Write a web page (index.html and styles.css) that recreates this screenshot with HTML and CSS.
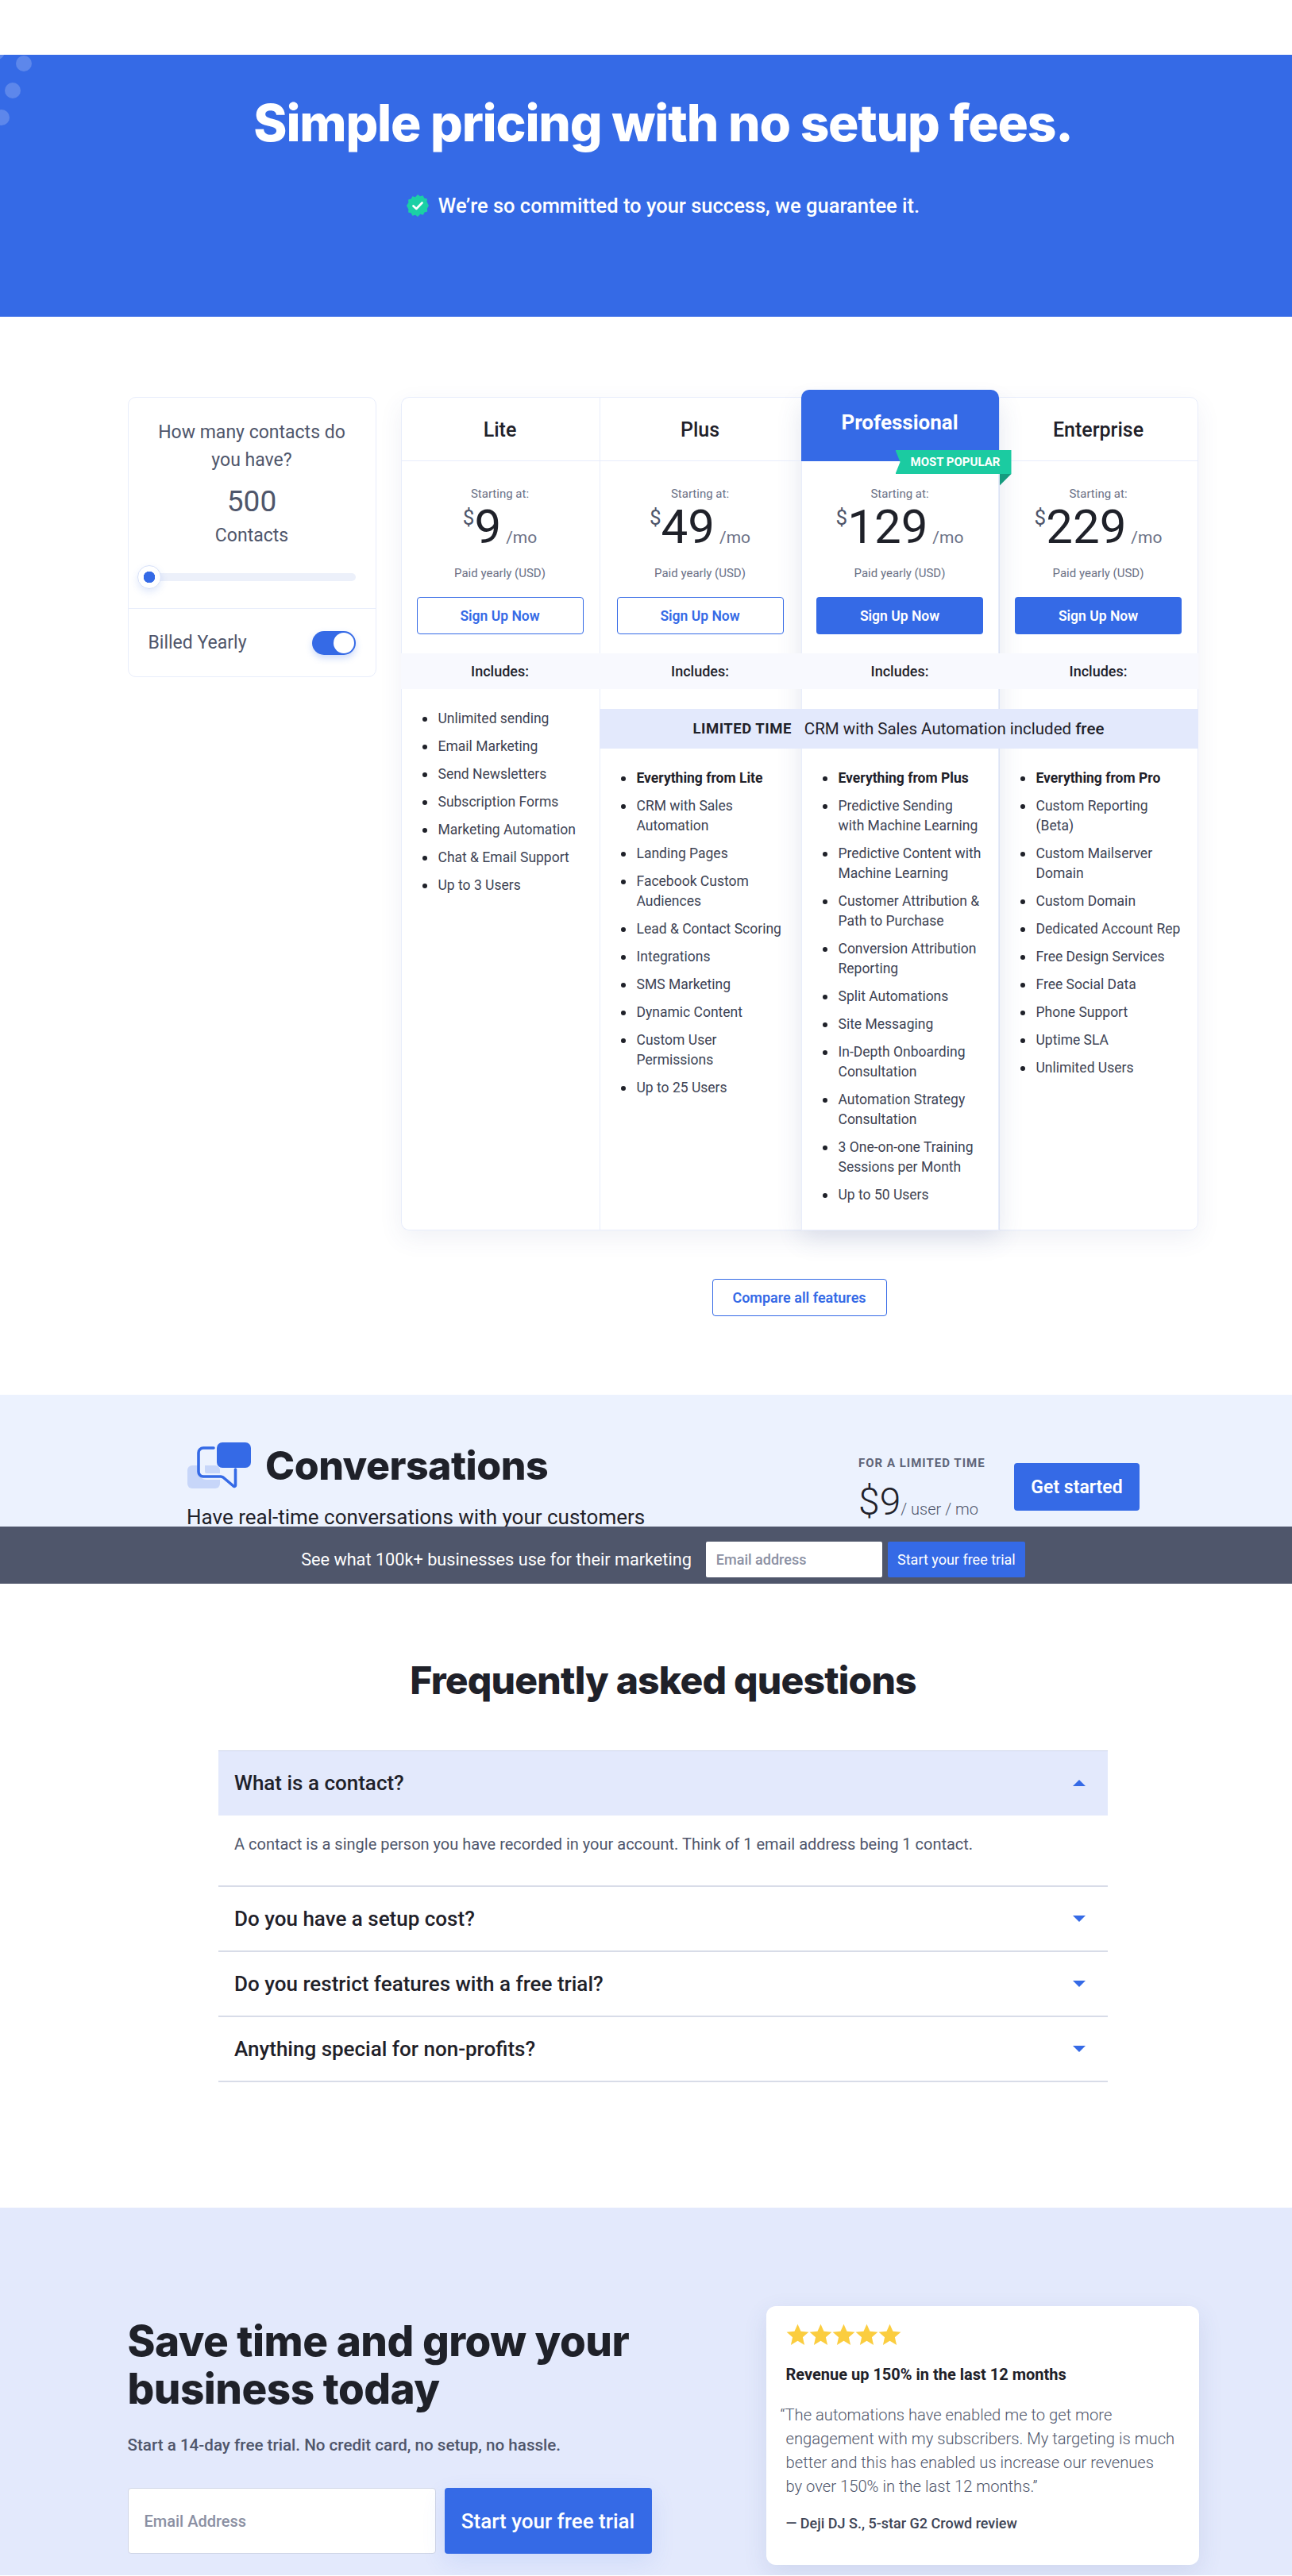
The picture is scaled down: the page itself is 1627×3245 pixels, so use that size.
FILE: index.html
```html
<!DOCTYPE html>
<html lang="en">
<head>
  <meta charset="UTF-8" />
  <meta name="viewport" content="width=device-width, initial-scale=1.0"/>
  <title>Pricing</title>
  <link rel="stylesheet" href="styles.css">
</head>
<body>
<div class="page">
  <section class="hero">
    <span class="hero-dot dot-a"></span>
    <span class="hero-dot dot-b"></span>
    <span class="hero-dot dot-c"></span>
    <span class="hero-dot dot-d"></span>
    <h1>Simple pricing with no setup fees.</h1>
    <p class="hero-sub">
      <svg class="badge" viewBox="0 0 28 28" width="28" height="28">
        <path fill="#1bd0a5" d="M14 0l3 2.2 3.600-.9 1.700 3.300 3.600 1-.3 3.700L28 14l-2.100 3.700.3 3.700-3.600 1-1.700 3.300-3.600-.9L14 28l-3-2.200-3.600.9-1.700-3.300-3.600-1 .3-3.700L0 14l2.400-3.700-.3-3.700 3.600-1 1.700-3.300 3.600.9z"/>
        <path fill="none" stroke="#fff" stroke-width="2.600" stroke-linecap="round" stroke-linejoin="round" d="M8.500 14.500l3.800 3.500 7.200-7.500"/>
      </svg>
      We&rsquo;re so committed to your success, we guarantee it.
    </p>
  </section>

  <section class="pricing">
    <div class="pricing-wrap">
      <aside class="contacts-card">
        <div class="contacts-top">
          <p class="contacts-question">How many contacts do you have?</p>
          <div class="contacts-count">500</div>
          <div class="contacts-label">Contacts</div>
          <div class="slider"><span class="slider-thumb"></span></div>
        </div>
        <div class="billing">
          <span>Billed Yearly</span>
          <span class="toggle"><span class="toggle-knob"></span></span>
        </div>
      </aside>

      <div class="plans-side">
        <div class="plans">
          <div class="col-line col-1"></div>
          <div class="col-line col-2"></div>
          <div class="col-line col-3 col-pro"></div>
          <div class="col-line col-4"></div>

          <div class="plan-head col-1">Lite</div>
          <div class="plan-head col-2">Plus</div>
          <div class="plan-head plan-head-pro col-3">
            Professional
            <span class="ribbon">MOST POPULAR</span>
          </div>
          <div class="plan-head col-4">Enterprise</div>

          <div class="plan-price col-1">
            <div class="starting">Starting at:</div>
            <div class="amount"><sup>$</sup>9<small>/mo</small></div>
            <div class="paid">Paid yearly (USD)</div>
            <a class="btn btn-outline">Sign Up Now</a>
          </div>
          <div class="plan-price col-2">
            <div class="starting">Starting at:</div>
            <div class="amount"><sup>$</sup>49<small>/mo</small></div>
            <div class="paid">Paid yearly (USD)</div>
            <a class="btn btn-outline">Sign Up Now</a>
          </div>
          <div class="plan-price col-3">
            <div class="starting">Starting at:</div>
            <div class="amount"><sup>$</sup>129<small>/mo</small></div>
            <div class="paid">Paid yearly (USD)</div>
            <a class="btn btn-solid">Sign Up Now</a>
          </div>
          <div class="plan-price col-4">
            <div class="starting">Starting at:</div>
            <div class="amount"><sup>$</sup>229<small>/mo</small></div>
            <div class="paid">Paid yearly (USD)</div>
            <a class="btn btn-solid">Sign Up Now</a>
          </div>

          <div class="includes col-1">Includes:</div>
          <div class="includes col-2">Includes:</div>
          <div class="includes col-3">Includes:</div>
          <div class="includes col-4">Includes:</div>

          <div class="limited"><b>LIMITED TIME</b>CRM with Sales Automation included <strong>free</strong></div>

          <ul class="features features-lite col-1">
            <li>Unlimited sending</li>
            <li>Email Marketing</li>
            <li>Send Newsletters</li>
            <li>Subscription Forms</li>
            <li>Marketing Automation</li>
            <li>Chat &amp; Email Support</li>
            <li>Up to 3 Users</li>
          </ul>
          <ul class="features col-2">
            <li><strong>Everything from Lite</strong></li>
            <li>CRM with Sales<br>Automation</li>
            <li>Landing Pages</li>
            <li>Facebook Custom<br>Audiences</li>
            <li>Lead &amp; Contact Scoring</li>
            <li>Integrations</li>
            <li>SMS Marketing</li>
            <li>Dynamic Content</li>
            <li>Custom User<br>Permissions</li>
            <li>Up to 25 Users</li>
          </ul>
          <ul class="features col-3">
            <li><strong>Everything from Plus</strong></li>
            <li>Predictive Sending<br>with Machine Learning</li>
            <li>Predictive Content with<br>Machine Learning</li>
            <li>Customer Attribution &amp;<br>Path to Purchase</li>
            <li>Conversion Attribution<br>Reporting</li>
            <li>Split Automations</li>
            <li>Site Messaging</li>
            <li>In-Depth Onboarding<br>Consultation</li>
            <li>Automation Strategy<br>Consultation</li>
            <li>3 One-on-one Training<br>Sessions per Month</li>
            <li>Up to 50 Users</li>
          </ul>
          <ul class="features col-4">
            <li><strong>Everything from Pro</strong></li>
            <li>Custom Reporting<br>(Beta)</li>
            <li>Custom Mailserver<br>Domain</li>
            <li>Custom Domain</li>
            <li>Dedicated Account Rep</li>
            <li>Free Design Services</li>
            <li>Free Social Data</li>
            <li>Phone Support</li>
            <li>Uptime SLA</li>
            <li>Unlimited Users</li>
          </ul>
        </div>
        <a class="compare">Compare all features</a>
      </div>
    </div>
  </section>

  <section class="conversations">
    <div class="conv-wrap">
      <div class="conv-left">
        <div class="conv-title">
          <svg class="conv-icon" viewBox="0 0 81 60" width="81" height="60">
            <path fill="#c7d6f9" d="M7 30h29a6 6 0 0 1 6 6v17a6 6 0 0 1-6 6H7a6 6 0 0 1-6-6V36a6 6 0 0 1 6-6z"/>
            <path fill="none" stroke="#ecf2fe" stroke-width="8" d="M19 30v8a6 6 0 0 0 6 6h20"/>
            <path fill="none" stroke="#356ae6" stroke-width="3.600" stroke-linecap="round" stroke-linejoin="round" d="M34 8H21a6 6 0 0 0-6 6v24a6 6 0 0 0 6 6h22a6 6 0 0 1 3 1l13 11a1.500 1.500 0 0 0 2.500-1V35"/>
            <rect fill="#356ae6" x="38" y="1" width="43" height="32" rx="7"/>
          </svg>
          <h2>Conversations</h2>
        </div>
        <p class="conv-sub">Have real-time conversations with your customers</p>
      </div>
      <div class="conv-right">
        <div class="conv-offer">
          <div class="conv-limited">FOR A LIMITED TIME</div>
          <div class="conv-price">$9<small>/ user / mo</small></div>
        </div>
        <a class="conv-btn">Get started</a>
      </div>
    </div>
  </section>

  <div class="signup-bar">
    <span class="signup-text">See what 100k+ businesses use for their marketing</span>
    <span class="signup-input">Email address</span>
    <a class="signup-btn">Start your free trial</a>
  </div>

  <section class="faq">
    <h2>Frequently asked questions</h2>
    <div class="faq-list">
      <div class="faq-item faq-open">
        <div class="faq-q">What is a contact?<span class="arrow arrow-up"></span></div>
        <p class="faq-a">A contact is a single person you have recorded in your account. Think of 1 email address being 1 contact.</p>
      </div>
      <div class="faq-item">
        <div class="faq-q">Do you have a setup cost?<span class="arrow"></span></div>
      </div>
      <div class="faq-item">
        <div class="faq-q">Do you restrict features with a free trial?<span class="arrow"></span></div>
      </div>
      <div class="faq-item">
        <div class="faq-q">Anything special for non-profits?<span class="arrow"></span></div>
      </div>
    </div>
  </section>

  <section class="trial">
    <div class="trial-wrap">
      <div class="trial-left">
        <h2>Save time and grow your<br>business today</h2>
        <p class="trial-sub">Start a 14-day free trial. No credit card, no setup, no hassle.</p>
        <div class="trial-form">
          <span class="trial-input">Email Address</span>
          <a class="trial-btn">Start your free trial</a>
        </div>
      </div>
      <div class="review">
        <div class="stars">
          <svg viewBox="0 0 24 24" width="29" height="30"><path d="M12 1l3.300 7.500 8.200.8-6.200 5.400 1.800 8L12 18.500l-7.100 4.200 1.800-8L.5 9.300l8.200-.8z"/></svg>
          <svg viewBox="0 0 24 24" width="29" height="30"><path d="M12 1l3.300 7.500 8.200.8-6.200 5.400 1.800 8L12 18.500l-7.100 4.200 1.800-8L.5 9.300l8.200-.8z"/></svg>
          <svg viewBox="0 0 24 24" width="29" height="30"><path d="M12 1l3.300 7.500 8.200.8-6.200 5.400 1.800 8L12 18.500l-7.100 4.200 1.800-8L.5 9.300l8.200-.8z"/></svg>
          <svg viewBox="0 0 24 24" width="29" height="30"><path d="M12 1l3.300 7.500 8.200.8-6.200 5.400 1.800 8L12 18.500l-7.100 4.200 1.800-8L.5 9.300l8.200-.8z"/></svg>
          <svg viewBox="0 0 24 24" width="29" height="30"><path d="M12 1l3.300 7.500 8.200.8-6.200 5.400 1.800 8L12 18.500l-7.100 4.200 1.800-8L.5 9.300l8.200-.8z"/></svg>
        </div>
        <div class="review-title">Revenue up 150% in the last 12 months</div>
        <p class="review-quote">&ldquo;The automations have enabled me to get more<br>engagement with my subscribers. My targeting is much<br>better and this has enabled us increase our revenues<br>by over 150% in the last 12 months.&rdquo;</p>
        <div class="review-author">&mdash; Deji DJ S., 5-star G2 Crowd review</div>
      </div>
    </div>
  </section>
</div>
</body>
</html>
```

FILE: styles.css
```css
html, body {
  margin: 0;
  padding: 0;
  overflow-x: hidden;
  background: #fff;
}

body {
  font-family: Roboto, "Noto Sans", sans-serif;
  color: #1f2129;
}

.page {
  width: 1670px;
  padding-top: 69px;
}

h1, h2, p {
  margin: 0;
}

/* hero */
.hero {
  position: relative;
  height: 330px;
  background: #356ae6;
  color: #fff;
  text-align: center;
  overflow: hidden;
}

.hero h1 {
  padding-top: 48px;
  font-family: Inter, sans-serif;
  font-size: 64px;
  line-height: 76px;
  font-weight: 800;
  letter-spacing: -1.2px;
}

.hero-sub {
  margin-top: 51px;
  font-size: 25.5px;
  line-height: 30px;
  font-weight: 500;
  display: flex;
  justify-content: center;
  align-items: center;
  gap: 12px;
}

.hero-dot {
  position: absolute;
  width: 20px;
  height: 20px;
  border-radius: 50%;
  background: rgba(255, 255, 255, 0.2);
}

.dot-a { left: 20px; top: 1px; }
.dot-b { left: 6px; top: 35px; }
.dot-c { left: -8px; top: 69px; }
.dot-d { left: -14px; top: -14px; }

/* pricing */
.pricing {
  padding: 101px 0 99px;
}

.pricing-wrap {
  width: 1349px;
  margin: 0 auto;
  display: flex;
  align-items: flex-start;
  gap: 31px;
}

.contacts-card {
  width: 313px;
  box-sizing: border-box;
  border: 1px solid #e8edfb;
  border-radius: 10px;
  flex: none;
}

.contacts-top {
  height: 266px;
  box-sizing: border-box;
  padding: 26px 20px 0;
  border-bottom: 1px solid #e8edfb;
  text-align: center;
  color: #4f566b;
}

.contacts-question {
  font-size: 23px;
  line-height: 35px;
}

.contacts-count {
  margin-top: 12px;
  font-size: 37px;
  line-height: 46px;
}

.contacts-label {
  margin-top: 5px;
  font-size: 23px;
  line-height: 30px;
}

.slider {
  position: relative;
  height: 10px;
  margin: 32px 5px 0;
  background: #ecf0fa;
  border-radius: 5px;
}

.slider-thumb {
  position: absolute;
  left: -14px;
  top: -10px;
  width: 28px;
  height: 28px;
  border: 1px solid #d5dff8;
  border-radius: 50%;
  background: radial-gradient(circle, #356ae6 0 7px, #fff 7.500px);
  box-shadow: 0 4px 10px rgba(53, 106, 230, 0.15);
}

.billing {
  height: 85px;
  padding: 0 25px;
  display: flex;
  justify-content: space-between;
  align-items: center;
  font-size: 23px;
  color: #4f566b;
}

.toggle {
  width: 55px;
  height: 30px;
  box-sizing: border-box;
  padding: 2px;
  border-radius: 15px;
  background: #356ae6;
  display: flex;
  justify-content: flex-end;
  box-shadow: 0 4px 8px rgba(53, 106, 230, 0.25);
}

.toggle-knob {
  width: 26px;
  height: 26px;
  border-radius: 50%;
  background: #fff;
}

.plans-side {
  width: 1004px;
  display: flex;
  flex-direction: column;
  align-items: center;
}

.plans {
  width: 100%;
  display: grid;
  grid-template-columns: 250px 254px 249px 251px;
  grid-template-rows: 81px 242px 45px 75px auto;
  border-radius: 10px;
  box-shadow: 0 10px 30px rgba(60, 80, 140, 0.08);
}

.col-1 { grid-column: 1; }
.col-2 { grid-column: 2; }
.col-3 { grid-column: 3; }
.col-4 { grid-column: 4; }

.col-line {
  grid-row: 1 / 6;
  background: #fff;
  border-left: 1px solid #e8edfb;
  border-top: 1px solid #e8edfb;
  border-bottom: 1px solid #e8edfb;
}

.col-line.col-1 { border-radius: 10px 0 0 10px; }
.col-line.col-4 {
  border-right: 1px solid #e8edfb;
  border-radius: 0 10px 10px 0;
}

.col-pro {
  position: relative;
  z-index: 1;
  border-right: 1px solid #e8edfb;
  box-shadow: 0 10px 30px rgba(60, 80, 140, 0.14);
}

.plan-head {
  grid-row: 1;
  position: relative;
  z-index: 2;
  padding-top: 2px;
  display: flex;
  align-items: center;
  justify-content: center;
  border-bottom: 1px solid #e8edfb;
  font-size: 25px;
  font-weight: 500;
  color: #1f2129;
}

.plan-head-pro {
  z-index: 4;
  margin-top: -9px;
  padding-top: 0;
  padding-bottom: 8px;
  border-bottom: 0;
  border-radius: 10px 10px 0 0;
  background: #356ae6;
  color: #fff;
  font-size: 26px;
  font-weight: 700;
}

.ribbon {
  position: absolute;
  left: 119px;
  top: 76px;
  width: 146px;
  height: 30px;
  line-height: 30px;
  padding-left: 19px;
  box-sizing: border-box;
  background: #1bcba1;
  clip-path: polygon(0 0, 100% 0, 100% 100%, 0 100%, 6px 50%);
  color: #fff;
  font-size: 15px;
  font-weight: 700;
  white-space: nowrap;
}

.plan-head-pro::after {
  content: "";
  position: absolute;
  left: 250px;
  top: 106px;
  width: 15px;
  height: 15px;
  background: #159b7e;
  clip-path: polygon(0 0, 100% 0, 0 100%);
}

.plan-price {
  grid-row: 2;
  position: relative;
  z-index: 2;
  display: flex;
  flex-direction: column;
  align-items: center;
  padding-top: 31px;
}

.starting, .paid {
  font-size: 15px;
  line-height: 20px;
  color: #6b7186;
}

.amount {
  font-size: 60px;
  line-height: 64px;
  color: #1f2129;
}

.amount sup {
  font-size: 26px;
  line-height: 0;
  vertical-align: 23px;
  color: #4f566b;
}

.amount small {
  margin-left: 6px;
  font-size: 21px;
  color: #6b7186;
}

.paid {
  margin-top: 3px;
}

.btn {
  box-sizing: border-box;
  width: 210px;
  height: 47px;
  margin-top: 20px;
  border-radius: 4px;
  display: flex;
  align-items: center;
  justify-content: center;
  font-size: 17.5px;
  font-weight: 600;
}

.btn-outline {
  border: 1px solid #356ae6;
  color: #356ae6;
  background: #fff;
}

.btn-solid {
  background: #356ae6;
  color: #fff;
}

.includes {
  grid-row: 3;
  position: relative;
  z-index: 2;
  display: flex;
  align-items: center;
  justify-content: center;
  background: #f8f9fe;
  font-size: 18px;
  font-weight: 500;
}

.limited {
  grid-row: 4;
  grid-column: 2 / 5;
  position: relative;
  z-index: 3;
  margin-top: 25px;
  display: flex;
  align-items: center;
  justify-content: center;
  background: #e3e9fc;
  font-size: 20.5px;
}

.limited b {
  margin-right: 16px;
  font-size: 18.5px;
  font-weight: 700;
  letter-spacing: 0.5px;
}

.limited strong {
  margin-left: 5px;
  font-weight: 500;
}

.features {
  grid-row: 5;
  position: relative;
  z-index: 2;
  margin: 0;
  padding: 25px 0 22px 47px;
  list-style: none;
  font-size: 17.5px;
  line-height: 25px;
  color: #3d4354;
  white-space: nowrap;
}

.features li {
  position: relative;
  margin-bottom: 10px;
}

.features li::before {
  content: "";
  position: absolute;
  left: -20px;
  top: 10px;
  width: 6px;
  height: 6px;
  border-radius: 50%;
  background: #1f2129;
}

.features strong {
  font-weight: 700;
  color: #1f2129;
}

.features-lite {
  grid-row: 4 / 6;
}

.compare {
  width: 220px;
  height: 47px;
  box-sizing: border-box;
  margin-top: 61px;
  border: 1px solid #356ae6;
  border-radius: 4px;
  display: flex;
  align-items: center;
  justify-content: center;
  color: #356ae6;
  font-size: 18px;
  font-weight: 600;
}

/* conversations */
.conversations {
  height: 166px;
  background: #ecf2fe;
  overflow: hidden;
}

.conv-wrap {
  width: 1200px;
  margin: 0 auto;
  display: flex;
  justify-content: space-between;
}

.conv-title {
  display: flex;
  align-items: center;
  gap: 18px;
  margin-top: 59px;
}

.conv-title h2 {
  font-family: Inter, sans-serif;
  font-size: 50px;
  line-height: 60px;
  font-weight: 800;
  letter-spacing: -0.5px;
}

.conv-sub {
  margin-top: 23px;
  font-size: 26px;
  line-height: 24px;
}

.conv-right {
  display: flex;
  align-items: flex-start;
  margin-top: 75px;
}

.conv-offer {
  width: 196px;
}

.conv-limited {
  margin-top: 2px;
  font-size: 15px;
  line-height: 18px;
  font-weight: 700;
  letter-spacing: 1px;
  color: #5f6579;
}

.conv-price {
  margin-top: 12px;
  font-size: 48px;
  line-height: 56px;
  font-weight: 300;
}

.conv-price small {
  font-size: 20px;
  color: #4f566b;
}

.conv-btn {
  width: 158px;
  height: 60px;
  margin-top: 11px;
  border-radius: 4px;
  background: #356ae6;
  color: #fff;
  display: flex;
  align-items: center;
  justify-content: center;
  font-size: 23px;
  font-weight: 600;
}

/* sticky signup */
.signup-bar {
  height: 72px;
  box-sizing: border-box;
  padding-top: 10px;
  background: #4f566b;
  display: flex;
  align-items: center;
  justify-content: center;
  color: #fff;
}

.signup-text {
  font-size: 21.7px;
  margin-right: 18px;
}

.signup-input {
  width: 222px;
  height: 45px;
  box-sizing: border-box;
  padding-left: 13px;
  background: #fff;
  border-radius: 2px;
  display: flex;
  align-items: center;
  color: #8b90a3;
  font-size: 18px;
  font-weight: 500;
}

.signup-btn {
  width: 173px;
  height: 45px;
  margin-left: 7px;
  background: #356ae6;
  border-radius: 2px;
  display: flex;
  align-items: center;
  justify-content: center;
  font-size: 18px;
}

/* faq */
.faq {
  height: 786px;
}

.faq h2 {
  padding-top: 92px;
  font-family: Inter, sans-serif;
  font-size: 48px;
  line-height: 60px;
  font-weight: 800;
  letter-spacing: -0.8px;
  text-align: center;
}

.faq-list {
  width: 1120px;
  margin: 58px auto 0;
}

.faq-item {
  border-bottom: 2px solid #d8dce8;
}

.faq-q {
  height: 80px;
  padding: 0 20px;
  display: flex;
  align-items: center;
  justify-content: space-between;
  font-size: 26px;
  font-weight: 500;
}

.faq-open .faq-q {
  height: 82px;
  background: #e3e9fc;
  box-shadow: inset 0 1px 0 #cdd5ea;
}

.faq-a {
  height: 88px;
  padding: 23px 20px 0;
  box-sizing: border-box;
  font-size: 20px;
  line-height: 26px;
  color: #4f566b;
}

.arrow {
  width: 0;
  height: 0;
  margin-right: 8px;
  border-left: 8px solid transparent;
  border-right: 8px solid transparent;
  border-top: 8px solid #356ae6;
}

.arrow-up {
  border-top: 0;
  border-bottom: 8px solid #356ae6;
}

/* bottom trial */
.trial {
  height: 463px;
  padding-top: 124px;
  box-sizing: border-box;
  background: #e3e9fc;
}

.trial-wrap {
  width: 1349px;
  margin: 0 auto;
  display: flex;
  justify-content: space-between;
  align-items: flex-start;
}

.trial-left {
  padding-top: 14px;
}

.trial-left h2 {
  font-family: Inter, sans-serif;
  font-size: 53px;
  line-height: 60px;
  font-weight: 800;
  letter-spacing: -0.5px;
}

.trial-sub {
  margin-top: 26px;
  font-size: 20.6px;
  line-height: 30px;
  font-weight: 500;
  color: #4f566b;
}

.trial-form {
  display: flex;
  gap: 11px;
  margin-top: 39px;
}

.trial-input {
  width: 388px;
  height: 83px;
  box-sizing: border-box;
  padding-left: 20px;
  background: #fff;
  border: 1px solid #cfd5e6;
  border-radius: 4px;
  display: flex;
  align-items: center;
  color: #8b90a3;
  font-size: 20px;
  font-weight: 500;
}

.trial-btn {
  width: 261px;
  height: 83px;
  border-radius: 4px;
  background: #356ae6;
  color: #fff;
  display: flex;
  align-items: center;
  justify-content: center;
  font-size: 26px;
  font-weight: 500;
  box-shadow: 0 10px 30px rgba(53, 106, 230, 0.12);
}

.review {
  width: 545px;
  height: 326px;
  box-sizing: border-box;
  padding: 21px 25px 0;
  background: #fff;
  border-radius: 12px;
  box-shadow: 0 10px 30px rgba(60, 80, 140, 0.12);
}

.stars {
  display: flex;
  height: 30px;
}

.stars svg {
  fill: #fbcd3f;
}

.review-title {
  margin-top: 22px;
  font-size: 20px;
  line-height: 26px;
  font-weight: 700;
}

.review-quote {
  margin-top: 23px;
  text-indent: -7px;
  font-size: 20.2px;
  line-height: 30px;
  font-weight: 300;
  color: #4f566b;
  white-space: nowrap;
}

.review-author {
  margin-top: 20px;
  font-size: 18px;
  line-height: 24px;
  font-weight: 500;
  color: #3d4354;
}
```
